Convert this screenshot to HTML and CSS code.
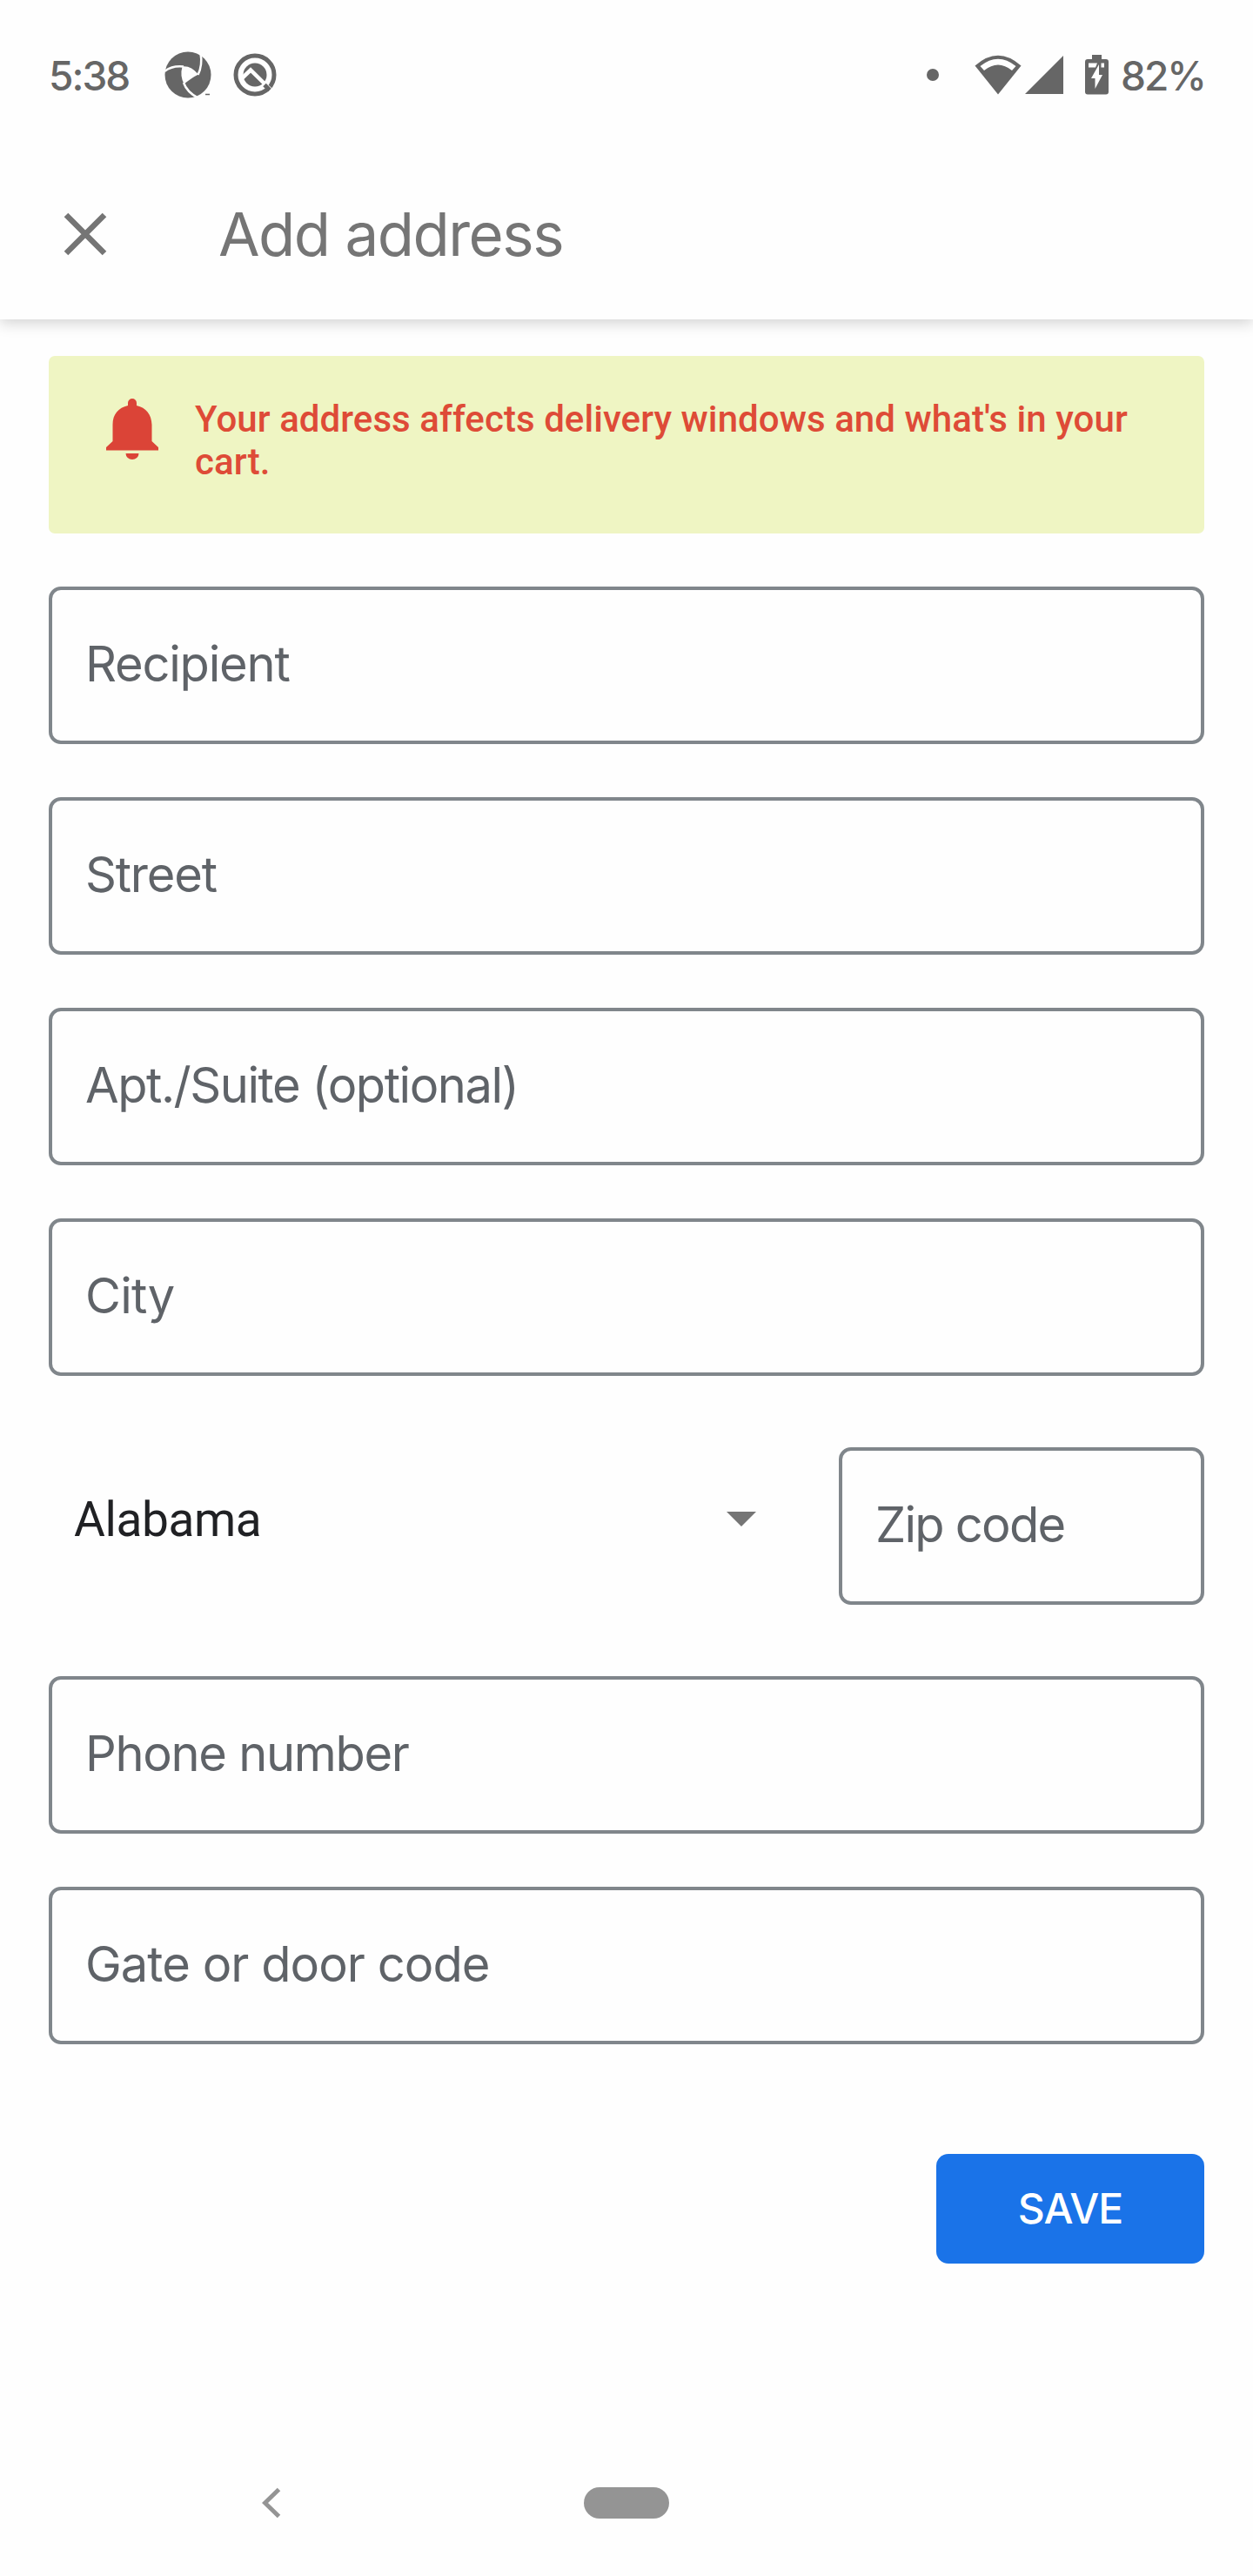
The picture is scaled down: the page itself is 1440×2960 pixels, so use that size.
FILE: index.html
```html
<!DOCTYPE html>
<html lang="en">
<head>
<meta charset="utf-8">
<title>Add address</title>
<link rel="stylesheet" href="styles.css">
</head>
<body>
<div class="screen">
  <header class="status">
    <span class="status-text clock">5:38</span>
    <svg class="ic-shutter" viewBox="0 0 54 54" width="54" height="54">
      <circle cx="27" cy="27" r="26.5" fill="#666"/>
      <path d="M20.500 17.500 Q30 16 39 26.500 Q32 30 22.500 37.500 Q17.500 28 20.500 17.500Z" fill="#fefefe"/>
      <path d="M0 23 Q9 16 22 17.500" fill="none" stroke="#fefefe" stroke-width="2.500"/>
      <path d="M38.500 27 Q44 16 41.500 2" fill="none" stroke="#fefefe" stroke-width="2.500"/>
      <path d="M22 36 Q26 47 38 53" fill="none" stroke="#fefefe" stroke-width="2.500"/>
      <path d="M47 49.500h5" stroke="#666" stroke-width="1.500"/>
    </svg>
    <svg class="ic-q" viewBox="0 0 50 50" width="50" height="50">
      <circle cx="25" cy="25" r="22" fill="none" stroke="#666" stroke-width="5"/>
      <circle cx="25" cy="25" r="13.500" fill="#666"/>
      <path d="M10 29 L20 19.500 L46 45" fill="none" stroke="#fefefe" stroke-width="4.500"/>
      <path d="M36 36.500 L42 42.500" stroke="#666" stroke-width="5"/>
    </svg>
    <span class="spacer"></span>
    <span class="dot"></span>
    <svg class="ic-wifi" viewBox="0 0 54 46" width="54" height="46">
      <path d="M.5 12.500 Q27-11 53.500 12.500 L27 45.500Z" fill="#666"/>
      <path d="M6.500 13 Q27-3.500 47.500 13 L43 18 Q27 5 11 18Z" fill="#fefefe"/>
    </svg>
    <svg class="ic-signal" viewBox="0 0 44 44" width="44" height="44"><path d="M44 0V44H0Z" fill="#666"/></svg>
    <svg class="ic-battery" viewBox="0 0 27 46" width="27" height="46">
      <path d="M8 0h11v5h5a3 3 0 0 1 3 3v34.500a3 3 0 0 1-3 3H3a3 3 0 0 1-3-3V8a3 3 0 0 1 3-3h5z" fill="#666"/>
      <path d="M4 9.500h10l-2 5H4zM18.500 9.500H22v5h-3.500zM16 11v12h4L11.500 39V27H7z" fill="#fefefe"/>
    </svg>
    <span class="status-text battery">82%</span>
  </header>
  <div class="appbar">
    <svg class="close" viewBox="0 0 50 50" width="50" height="50"><path d="M3 3L47 47M47 3L3 47" stroke="#757575" stroke-width="6.500"/></svg>
    <h1 class="title">Add address</h1>
  </div>
  <main class="form">
    <div class="notice">
      <svg class="bell" viewBox="0 0 60 70" width="60" height="70"><path d="M30 0a5 5 0 0 1 5 5v3c11 2.500 17 10 17.500 22v19l7.500 7v3.500H0V56l7.500-7V30C7.500 18 14 10.500 25 8V5a5 5 0 0 1 5-5zM22.500 63h15a7.500 7 0 0 1-15 0z" fill="#db4437"/></svg>
      <p class="notice-text">Your address affects delivery windows and what's in your cart.</p>
    </div>
    <div class="field"><span class="label recipient">Recipient</span></div>
    <div class="field"><span class="label street">Street</span></div>
    <div class="field"><span class="label apt">Apt./Suite (optional)</span></div>
    <div class="field"><span class="label city">City</span></div>
    <div class="row">
      <div class="select"><span>Alabama</span><svg viewBox="0 0 34 17" width="34" height="17"><path d="M0 0H34L17 17Z" fill="#757575"/></svg></div>
      <div class="field zip"><span class="label zipcode">Zip code</span></div>
    </div>
    <div class="field"><span class="label phone">Phone number</span></div>
    <div class="field"><span class="label gate">Gate or door code</span></div>
    <button class="save">SAVE</button>
  </main>
  <nav class="nav">
    <svg class="back" viewBox="0 0 22 36" width="22" height="36"><path d="M19.500 2.500L3.500 18L19.500 33.500" fill="none" stroke="#949494" stroke-width="5"/></svg>
    <span class="home"></span>
  </nav>
</div>
</body>
</html>
```
FILE: styles.css
```css
* { box-sizing: border-box; }
body { margin: 0; background: #fefefe; }
.screen { width: 1440px; height: 2960px; display: flex; flex-direction: column; font-family: Inter, sans-serif; background: #fefefe; }
.status { height: 171px; padding: 0 56px; display: flex; align-items: center; flex: none; }
.status svg { flex: none; }
.status-text { font-size: 46px; color: #666; font-weight: 500; line-height: 56px; white-space: nowrap; letter-spacing: -2px; padding-top: 2px; }
.clock { width: 133px; }
.ic-shutter { margin-right: 25px; }
.spacer { flex: 1; }
.dot { width: 14px; height: 14px; border-radius: 50%; background: #666; margin-right: 41px; }
.ic-wifi { margin-right: 4px; }
.ic-signal { margin-right: 25px; }
.ic-battery { margin-right: 14px; }
.battery { width: 96px; }
.appbar { height: 196px; flex: none; display: flex; align-items: center; padding: 0 73px 1px; background: #fefefe; box-shadow: 0 4px 16px rgba(0,0,0,.18); clip-path: inset(0 0 -30px 0); }
.title { margin: 0 0 0 128px; font-size: 69px; line-height: 84px; font-weight: 400; color: #757575; white-space: nowrap; letter-spacing: -1.5px; padding-top: 1px; }
.form { padding: 42px 56px 0; display: flex; flex-direction: column; }
.notice { height: 204px; border-radius: 7px; background: #eff5c3; display: flex; align-items: flex-start; padding: 48px 60px 0 66px; margin-bottom: 61px; }
.bell { flex: none; margin: 1px 42px 0 0; }
.notice-text { margin: 0; font: 500 42px/49px Roboto, sans-serif; letter-spacing: .07px; color: #de4b37; }
.field { height: 181px; border: 4px solid #80868b; border-radius: 14px; margin-bottom: 61px; display: flex; align-items: center; padding: 0 38px 3px; }
.label { font-size: 56px; line-height: 68px; color: #5f6368; white-space: nowrap; letter-spacing: -1.2px; }
.apt { letter-spacing: -1.45px; }
.city { letter-spacing: -.7px; }
.zipcode { letter-spacing: -1.75px; }
.phone { letter-spacing: -1.3px; }
.gate { letter-spacing: -.95px; }
.row { display: flex; margin: 21px 0 21px; }
.row .field { width: 420px; }
.select { flex: 1; display: flex; align-items: center; justify-content: space-between; height: 165px; padding: 0 95px 0 29px; font: 55px/66px Roboto, sans-serif; letter-spacing: -.4px; color: #202124; }
.save { align-self: flex-end; width: 308px; height: 126px; margin-top: 65px; padding: 0; border: 0; border-radius: 14px; background: #1a73e8; color: #fff; font: 500 48px/60px Inter, sans-serif; letter-spacing: -1px; }
.nav { margin-top: auto; height: 168px; display: flex; align-items: center; padding-left: 301px; }
.home { margin-left: 348px; width: 98px; height: 36px; border-radius: 18px; background: #949494; }
```
